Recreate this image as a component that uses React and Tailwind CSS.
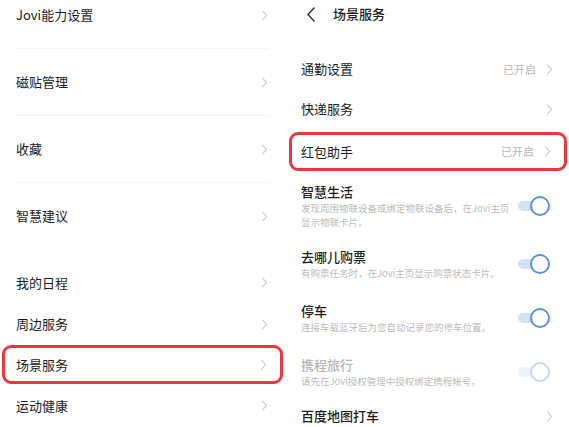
import React from 'react';

const FONT = "font-['Noto_Sans_CJK_SC','Noto_Sans',sans-serif]";

const Chevron = ({ className = '' }) => (
  <svg width="7" height="11" viewBox="0 0 7 11" className={className}>
    <path d="M1.5 1 L5.5 5.5 L1.5 10" fill="none" stroke="#c4c4c4" strokeWidth="1.1" strokeLinecap="round" strokeLinejoin="round" />
  </svg>
);

const Toggle = ({ disabled }) => (
  <div className={`relative shrink-0 w-[32px] h-[20px] mr-[3px] ${disabled ? 'opacity-35' : ''}`}>
    <div className="absolute left-0 top-[5px] w-[24px] h-[10px] rounded-full bg-[#d3e2f7]" />
    <div className="absolute right-0 top-0 w-[20px] h-[20px] rounded-full bg-white border-[2.5px] border-[#5c90e4]" />
  </div>
);

const LeftRow = ({ label, h }) => (
  <div className={`shrink-0 flex items-center justify-between ${h}`}>
    <span className="text-[13px] text-[#1c1c1c]">{label}</span>
    <Chevron />
  </div>
);

const Divider = () => <div className="h-px bg-[#f5f5f5]" />;

const RightRow = ({ label, value, bold, h = 'h-[40px]' }) => (
  <div className={`shrink-0 flex items-center justify-between ${h}`}>
    <span className={`text-[13px] text-[#1c1c1c] ${bold ? 'font-medium' : ''}`}>{label}</span>
    <div className="flex items-center gap-[10px]">
      {value && <span className="text-[11px] text-[#b8b8b8]">{value}</span>}
      <Chevron />
    </div>
  </div>
);

const ToggleRow = ({ title, sub, disabled, className = '' }) => (
  <div className={`shrink-0 flex items-center justify-between ${className}`}>
    <div className="w-[215px]">
      <p className={`text-[13px] leading-[18px] font-medium ${disabled ? 'text-[#b5b5b5]' : 'text-[#1c1c1c]'}`}>{title}</p>
      <p className="text-[9.5px] leading-[14px] text-[#bcbcbc]">{sub}</p>
    </div>
    <Toggle disabled={disabled} />
  </div>
);

export default function App() {
  return (
    <div className={`w-[569px] h-[427px] overflow-hidden bg-white flex ${FONT}`}>
      {/* left screen */}
      <div className="w-[285px] shrink-0 flex flex-col">
        <div className="shrink-0 pl-4 pr-[17px]">
          <LeftRow label="Jovi能力设置" h="h-[30px]" />
        </div>
        <div className="shrink-0 mt-[18px] pl-4 pr-[17px]">
          <Divider />
          <LeftRow label="磁贴管理" h="h-[66px]" />
          <Divider />
          <LeftRow label="收藏" h="h-[66px]" />
          <Divider />
          <LeftRow label="智慧建议" h="h-[66px]" />
        </div>
        <div className="shrink-0 mt-[13px] pl-4 pr-[17px]">
          <LeftRow label="我的日程" h="h-[41px]" />
          <LeftRow label="周边服务" h="h-[42px]" />
        </div>
        <div className="shrink-0 ml-[2px] w-[281px] h-[39px] border-[3px] border-[#e8373d] rounded-[9px] pl-[11px] pr-[13px] flex items-center justify-between">
          <span className="text-[13px] text-[#1c1c1c]">场景服务</span>
          <Chevron />
        </div>
        <div className="shrink-0 pl-4 pr-[17px]">
          <LeftRow label="运动健康" h="h-[43px]" />
        </div>
      </div>

      {/* right screen */}
      <div className="w-[284px] shrink-0 flex flex-col">
        <div className="shrink-0 h-[28px] flex items-center pl-[21px]">
          <svg width="10" height="15" viewBox="0 0 10 15">
            <path d="M8 1 L2 7.5 L8 14" fill="none" stroke="#333" strokeWidth="1.5" strokeLinecap="round" strokeLinejoin="round" />
          </svg>
          <span className="ml-[17px] text-[13px] font-medium text-[#1c1c1c]">场景服务</span>
        </div>
        <div className="shrink-0 mt-[21px] pl-4 pr-4">
          <RightRow label="通勤设置" value="已开启" />
          <RightRow label="快递服务" />
        </div>
        <div className="shrink-0 mt-[3px] ml-[4px] w-[278px] h-[39px] border-[3px] border-[#e8373d] rounded-[9px] pl-[9px] pr-[13px] flex items-center justify-between">
          <span className="text-[13px] text-[#1c1c1c]">红包助手</span>
          <div className="flex items-center gap-[10px]">
            <span className="text-[11px] text-[#b8b8b8]">已开启</span>
            <Chevron />
          </div>
        </div>
        <div className="shrink-0 pl-4 pr-4 flex flex-col">
          <ToggleRow
            className="mt-[12px]"
            title="智慧生活"
            sub="发现周围物联设备或绑定物联设备后，在Jovi主页显示物联卡片。"
          />
          <ToggleRow className="mt-[19px]" title="去哪儿购票" sub="有购票任务时，在Jovi主页显示购票状态卡片。" />
          <ToggleRow className="mt-[22px]" title="停车" sub="连接车载蓝牙后为您自动记录您的停车位置。" />
          <ToggleRow className="mt-[22px]" title="携程旅行" sub="请先在Jovi授权管理中授权绑定携程帐号。" disabled />
          <div className="mt-[8px]">
            <RightRow label="百度地图打车" bold />
          </div>
        </div>
      </div>
    </div>
  );
}
